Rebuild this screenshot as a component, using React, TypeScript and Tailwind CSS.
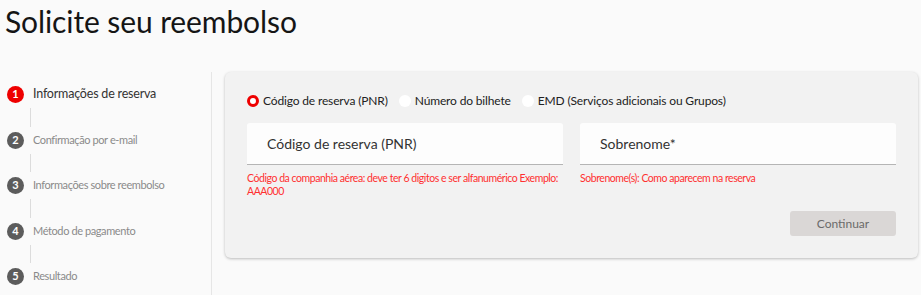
import React from "react";

const steps = [
    "Informações de reserva",
    "Confirmação por e-mail",
    "Informações sobre reembolso",
    "Método de pagamento",
    "Resultado",
];

const options = ["Código de reserva (PNR)", "Número do bilhete", "EMD (Serviços adicionais ou Grupos)"];

export default function App() {
    return (
        <div className="min-h-screen bg-[#fafafa] text-[#151515] font-['Lato','Noto_Sans',sans-serif] overflow-hidden">
            <h1 className="pl-[5px] pt-[3px] h-[72px] text-[30px] leading-[36px] tracking-[-0.1px]">Solicite seu reembolso</h1>

            <div className="flex">
                <aside className="w-[212px] h-[223px] border-r border-[#e6e6e6] pl-[7px] pt-[14px]">
                    {steps.map((step, i) => (
                        <div key={step}>
                            <div className="flex items-center h-[17px]">
                                <span
                                    className={
                                        i === 0
                                            ? "w-[17px] h-[17px] rounded-full bg-[#ee0000] text-white text-[11px] font-bold flex items-center justify-center"
                                            : "w-[17px] h-[17px] rounded-full bg-[#5c5c5c] text-white text-[11px] font-bold flex items-center justify-center"
                                    }
                                >
                                    {i + 1}
                                </span>
                                <span
                                    className={
                                        i === 0
                                            ? "ml-[9px] text-[12.5px] tracking-[-0.2px] text-[#333]"
                                            : "ml-[9px] text-[11px] tracking-[-0.4px] text-[#8a8a8a]"
                                    }
                                >
                                    {step}
                                </span>
                            </div>
                            {i < steps.length - 1 && (
                                <div className="h-[28.5px] ml-[23px] py-[5px]">
                                    <div className="w-px h-full bg-[#dcdcdc]" />
                                </div>
                            )}
                        </div>
                    ))}
                </aside>

                <div className="ml-[13px] w-[693px] h-[186px] rounded-[6px] bg-[#f2f2f2] shadow-[0_1px_3px_rgba(0,0,0,0.25)] px-[22px] pt-[22px]">
                    <div className="flex items-center gap-[11px] h-[14px]">
                        {options.map((opt, i) => (
                            <label key={opt} className="flex items-center gap-[4px] text-[12px] tracking-[-0.15px] text-[#222]">
                                <span
                                    className={
                                        i === 0
                                            ? "w-[12px] h-[12px] rounded-full border-[3px] border-[#ee0000] bg-white"
                                            : "w-[12px] h-[12px] rounded-full bg-white"
                                    }
                                />
                                {opt}
                            </label>
                        ))}
                    </div>

                    <div className="flex gap-[17px] mt-[15px]">
                        <div className="w-[316px]">
                            <div className="h-[42px] bg-[#fdfdfd] rounded-t-[3px] border-b border-[#b5b5b5] flex items-center pl-[20px] text-[14px] text-[#333]">
                                Código de reserva (PNR)
                            </div>
                            <p className="mt-[7px] text-[10.5px] leading-[13px] tracking-[-0.45px] text-[#ff3030]">
                                Código da companhia aérea: deve ter 6 digitos e ser alfanumérico Exemplo: AAA000
                            </p>
                        </div>
                        <div className="w-[316px]">
                            <div className="h-[42px] bg-[#fdfdfd] rounded-t-[3px] border-b border-[#b5b5b5] flex items-center pl-[20px] text-[14px] text-[#333]">
                                Sobrenome*
                            </div>
                            <p className="mt-[7px] text-[10.5px] leading-[13px] tracking-[-0.45px] text-[#ff3030]">
                                Sobrenome(s): Como aparecem na reserva
                            </p>
                        </div>
                    </div>

                    <div className="flex justify-end mt-[13px]">
                        <button className="w-[106px] h-[25px] rounded-[3px] bg-[#dad7d6] text-[12px] text-[#6a6a6a]">
                            Continuar
                        </button>
                    </div>
                </div>
            </div>
        </div>
    );
}
